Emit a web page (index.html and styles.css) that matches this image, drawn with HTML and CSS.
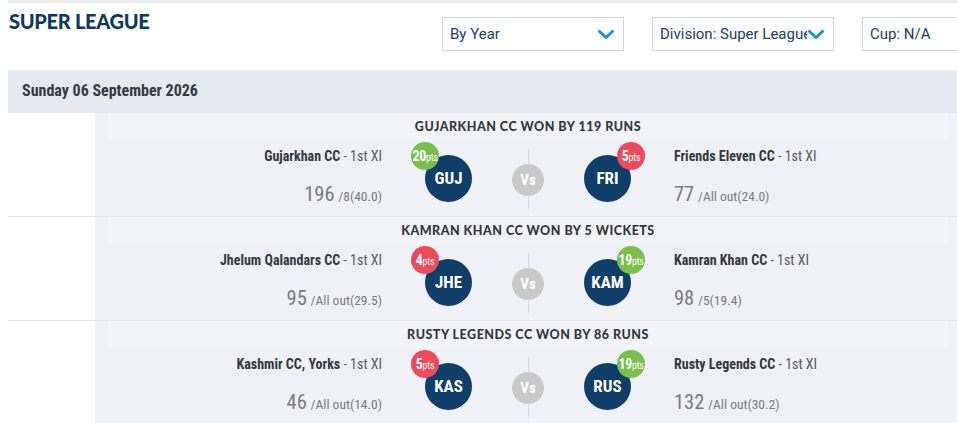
FILE: index.html
```html
<!DOCTYPE html>
<html lang="en">
<head>
<meta charset="utf-8">
<title>Super League</title>
<link rel="stylesheet" href="styles.css">
</head>
<body>
<div class="page">
  <div class="topstrip"></div>
  <header class="header">
    <h1 class="title">SUPER LEAGUE</h1>
    <div class="filters">
      <div class="select"><span class="select-text">By Year</span><svg class="chev" width="18" height="10" viewBox="0 0 18 10"><polyline points="1.5,1.5 9,8.5 16.5,1.5"/></svg></div>
      <div class="select"><span class="select-text">Division: Super League</span><svg class="chev" width="18" height="10" viewBox="0 0 18 10"><polyline points="1.5,1.5 9,8.5 16.5,1.5"/></svg></div>
      <div class="select"><span class="select-text">Cup: N/A</span><svg class="chev" width="18" height="10" viewBox="0 0 18 10"><polyline points="1.5,1.5 9,8.5 16.5,1.5"/></svg></div>
    </div>
  </header>

  <div class="date-bar">Sunday 06 September 2026</div>

  <div class="match">
    <div class="match-side"></div>
    <div class="match-main">
      <div class="match-card">
        <div class="result">GUJARKHAN CC WON BY 119 RUNS</div>
        <div class="fixture">
          <div class="team team-home">
            <div class="team-name"><b>Gujarkhan CC</b> - 1st XI</div>
            <div class="score"><span class="runs">196</span> <span class="extra">/8(40.0)</span></div>
          </div>
          <div class="crest crest-home"><span class="pts pts-win">20<small>pts</small></span>GUJ</div>
          <div class="vs-col"><span class="vline vline-top"></span><span class="vs">Vs</span><span class="vline vline-bottom"></span></div>
          <div class="crest crest-away"><span class="pts pts-lose">5<small>pts</small></span>FRI</div>
          <div class="team team-away">
            <div class="team-name"><b>Friends Eleven CC</b> - 1st XI</div>
            <div class="score"><span class="runs">77</span> <span class="extra">/All out(24.0)</span></div>
          </div>
        </div>
      </div>
    </div>
  </div>

  <div class="match">
    <div class="match-side"></div>
    <div class="match-main">
      <div class="match-card">
        <div class="result">KAMRAN KHAN CC WON BY 5 WICKETS</div>
        <div class="fixture">
          <div class="team team-home">
            <div class="team-name"><b>Jhelum Qalandars CC</b> - 1st XI</div>
            <div class="score"><span class="runs">95</span> <span class="extra">/All out(29.5)</span></div>
          </div>
          <div class="crest crest-home"><span class="pts pts-lose">4<small>pts</small></span>JHE</div>
          <div class="vs-col"><span class="vline vline-top"></span><span class="vs">Vs</span><span class="vline vline-bottom"></span></div>
          <div class="crest crest-away"><span class="pts pts-win">19<small>pts</small></span>KAM</div>
          <div class="team team-away">
            <div class="team-name"><b>Kamran Khan CC</b> - 1st XI</div>
            <div class="score"><span class="runs">98</span> <span class="extra">/5(19.4)</span></div>
          </div>
        </div>
      </div>
    </div>
  </div>

  <div class="match">
    <div class="match-side"></div>
    <div class="match-main">
      <div class="match-card">
        <div class="result">RUSTY LEGENDS CC WON BY 86 RUNS</div>
        <div class="fixture">
          <div class="team team-home">
            <div class="team-name"><b>Kashmir CC, Yorks</b> - 1st XI</div>
            <div class="score"><span class="runs">46</span> <span class="extra">/All out(14.0)</span></div>
          </div>
          <div class="crest crest-home"><span class="pts pts-lose">5<small>pts</small></span>KAS</div>
          <div class="vs-col"><span class="vline vline-top"></span><span class="vs">Vs</span><span class="vline vline-bottom"></span></div>
          <div class="crest crest-away"><span class="pts pts-win">19<small>pts</small></span>RUS</div>
          <div class="team team-away">
            <div class="team-name"><b>Rusty Legends CC</b> - 1st XI</div>
            <div class="score"><span class="runs">132</span> <span class="extra">/All out(30.2)</span></div>
          </div>
        </div>
      </div>
    </div>
  </div>
</div>
</body>
</html>
```

FILE: styles.css
```css
html, body {
  margin: 0;
  padding: 0;
  background: #ffffff;
  overflow: hidden;
}

.page {
  margin-left: 8px;
  width: 949px;
  font-family: "Liberation Sans Narrow", "Roboto Condensed", "DejaVu Sans Condensed", "Arial Narrow", sans-serif;
  color: #333333;
}

.topstrip {
  height: 3px;
  background: #ececec;
}

.header {
  display: flex;
  align-items: flex-start;
  height: 67px;
}

.title {
  margin: 6px 0 0 1px;
  width: 433px;
  flex-shrink: 0;
  font-family: Lato, "Open Sans", sans-serif;
  font-weight: 900;
  font-size: 20px;
  line-height: 24px;
  color: #0d3a63;
  letter-spacing: -0.3px;
}

.filters {
  display: flex;
  gap: 28px;
  margin-top: 14px;
  flex-shrink: 0;
}

.select {
  box-sizing: border-box;
  width: 182px;
  height: 34px;
  border: 1px solid #cfd5dd;
  display: flex;
  align-items: center;
  padding: 0 8px 0 7px;
  background: #ffffff;
  flex-shrink: 0;
}

.select-text {
  flex: 1;
  min-width: 0;
  overflow: hidden;
  white-space: nowrap;
  font-family: Roboto, "Liberation Sans", sans-serif;
  font-size: 15px;
  color: #22406a;
}

.chev {
  flex-shrink: 0;
}

.chev polyline {
  fill: none;
  stroke: #1a8fe3;
  stroke-width: 3;
}

.date-bar {
  height: 43px;
  line-height: 42px;
  background: #e6e9f1;
  padding-left: 14px;
  font-size: 16px;
  font-weight: 700;
  color: #333a42;
}

.match {
  display: flex;
  border-bottom: 1px solid #e3e5ea;
}

.match-side {
  width: 87px;
  flex-shrink: 0;
  background: #ffffff;
}

.match-main {
  flex: 1;
  background: #eff1f6;
  padding: 0 9px 0 13px;
}

.result {
  height: 28px;
  line-height: 27px;
  background: #f3f4f8;
  text-align: center;
  font-family: Lato, "Open Sans", sans-serif;
  font-weight: 900;
  font-size: 12.5px;
  letter-spacing: 0.5px;
  color: #333840;
}

.fixture {
  display: flex;
  align-items: center;
  height: 75px;
}

.team {
  flex: 1;
  align-self: stretch;
  padding-top: 6px;
  white-space: nowrap;
}

.team-home {
  text-align: right;
}

.team-away {
  text-align: left;
}

.team-name {
  font-size: 14px;
  line-height: 18px;
  color: #555b63;
}

.team-name b {
  color: #333840;
}

.score {
  margin-top: 17px;
  line-height: 24px;
  color: #777b80;
}

.runs {
  font-size: 20.5px;
}

.extra {
  font-size: 13.5px;
}

.crest {
  position: relative;
  width: 47px;
  height: 47px;
  flex-shrink: 0;
  border-radius: 50%;
  background: #0f3e68;
  color: #ffffff;
  font-weight: 700;
  font-size: 17px;
  line-height: 47px;
  text-align: center;
}

.crest-home {
  margin: 0 40px 0 43px;
}

.crest-away {
  margin: 0 43px 0 40px;
}

.pts {
  position: absolute;
  top: -13px;
  width: 28px;
  height: 28px;
  border-radius: 50%;
  color: #ffffff;
  font-size: 14px;
  font-weight: 700;
  line-height: 28px;
  text-align: center;
  letter-spacing: -0.3px;
}

.pts small {
  font-size: 10px;
  font-weight: 400;
}

.crest-home .pts {
  left: -14px;
}

.crest-away .pts {
  right: -14px;
}

.pts-win {
  background: #78c04b;
}

.pts-lose {
  background: #ef4a5c;
}

.vs-col {
  width: 32px;
  flex-shrink: 0;
  display: flex;
  flex-direction: column;
  align-items: center;
}

.vline {
  width: 1px;
  background: #d3daea;
}

.vline-top {
  height: 15px;
}

.vline-bottom {
  height: 13px;
}

.vs {
  width: 32px;
  height: 32px;
  border-radius: 50%;
  background: #c9c9c9;
  color: #ffffff;
  font-weight: 700;
  font-size: 15px;
  line-height: 32px;
  text-align: center;
}
```
